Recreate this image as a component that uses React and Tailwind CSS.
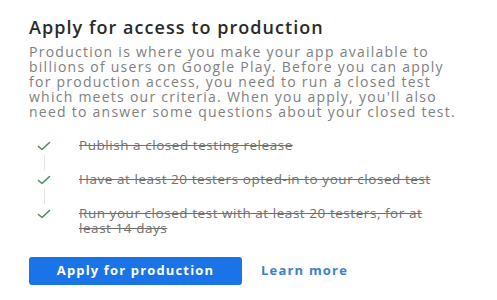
import React from "react";

const Check = () => (
  <svg width="14" height="10" viewBox="0 0 14 10" className="shrink-0">
    <path d="M1.5 5.5 L5 8.5 L12.5 1.5" fill="none" stroke="#4a8f63" strokeWidth="1.6" strokeLinecap="round" strokeLinejoin="round" />
  </svg>
);

export default function App() {
  const items = [
    ["Publish a closed testing release"],
    ["Have at least 20 testers opted-in to your closed test"],
    ["Run your closed test with at least 20 testers, for at", "least 14 days"],
  ];
  return (
    <div className="w-[497px] h-[300px] bg-white overflow-hidden pl-[29px] pt-[14px]" style={{ fontFamily: '"Open Sans", Roboto, sans-serif' }}>
      <h1 className="text-[18px] leading-[26px] text-[#2a2a2a] font-semibold tracking-[1.05px]">Apply for access to production</h1>
      <p className="mt-[4px] text-[14px] leading-[15px] text-[#808080] tracking-[1.25px]">
        <span className="block whitespace-nowrap">Production is where you make your app available to</span>
        <span className="block whitespace-nowrap">billions of users on Google Play. Before you can apply</span>
        <span className="block whitespace-nowrap">for production access, you need to run a closed test</span>
        <span className="block whitespace-nowrap">which meets our criteria. When you apply, you'll also</span>
        <span className="block whitespace-nowrap">need to answer some questions about your closed test.</span>
      </p>
      <div className="mt-[19px] flex flex-col">
        {items.map((lines, i) => (
          <div key={i} className="flex">
            <div className="w-[50px] flex flex-col items-center pl-[2px] pr-[22px]">
              <div className="h-[15px] flex items-center"><Check /></div>
              {i < items.length - 1 && <div className="w-px flex-1 bg-[#e4e4e4] my-[2px]" />}
            </div>
            <div className={`text-[13.5px] leading-[15px] text-[#707070] line-through tracking-[0.55px] whitespace-nowrap ${i < items.length - 1 ? "pb-[19px]" : ""}`}>
              {lines.map((l, j) => (
                <span key={j} className="block">{l}</span>
              ))}
            </div>
          </div>
        ))}
      </div>
      <div className="mt-[21px] flex items-center">
        <button className="w-[213px] h-[28px] rounded-[3px] bg-[#1b73e8] text-white text-[13px] font-bold tracking-[1.15px]">Apply for production</button>
        <span className="ml-[19px] text-[13px] font-bold text-[#3b7fd0] tracking-[1.2px]">Learn more</span>
      </div>
    </div>
  );
}
